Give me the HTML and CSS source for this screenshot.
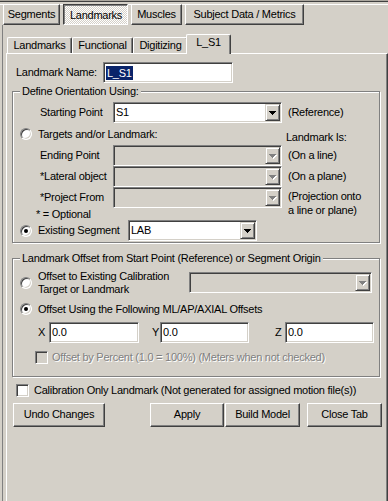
FILE: index.html
```html
<!DOCTYPE html>
<html>
<head>
<meta charset="utf-8">
<title>Landmarks</title>
<link rel="stylesheet" href="styles.css">
</head>
<body>
<div class="window">
  <div class="frame-top"></div>
  <div class="btabs">
    <div class="btab w-seg">Segments</div>
    <div class="btab pressed w-lm">Landmarks</div>
    <div class="btab w-mus">Muscles</div>
    <div class="btab w-subj">Subject Data / Metrics</div>
  </div>
  <div class="outer-page">
    <div class="itabs">
      <div class="itab w-t1">Landmarks</div>
      <div class="itab w-t2">Functional</div>
      <div class="itab w-t3">Digitizing</div>
      <div class="itab sel w-t4">L_S1</div>
    </div>
    <div class="ipage">
      <div class="name-row">
        <span class="name-lbl">Landmark Name:</span>
        <div class="edit name-edit"><span class="hilite">L_S1</span></div>
      </div>

      <div class="group g1">
        <div class="gtitle">Define Orientation Using:</div>
        <div class="orow row-a">
          <span class="olbl">Starting Point</span>
          <div class="combo w-main"><span class="combo-text">S1</span><span class="combo-btn"><svg width="7" height="4" viewBox="0 0 7 4" shape-rendering="crispEdges"><path d="M0 0h7v1h-1v1h-1v1h-1v1h-1v-1h-1v-1h-1v-1h-1z" fill="#000"/></svg></span></div>
          <span class="note">(Reference)</span>
        </div>
        <div class="rrow row-b">
          <span class="radio"></span>
          <span class="rlbl">Targets and/or Landmark:</span>
          <span class="note-is">Landmark Is:</span>
        </div>
        <div class="orow">
          <span class="olbl">Ending Point</span>
          <div class="combo disabled w-main"><span class="combo-text"></span><span class="combo-btn"><svg width="8" height="5" viewBox="0 0 8 5" shape-rendering="crispEdges"><path d="M1 1h7v1h-1v1h-1v1h-1v1h-1v-1h-1v-1h-1v-1h-1z" fill="#fff"/><path d="M0 0h7v1h-1v1h-1v1h-1v1h-1v-1h-1v-1h-1v-1h-1z" fill="#808080"/></svg></span></div>
          <span class="note">(On a line)</span>
        </div>
        <div class="orow">
          <span class="olbl">*Lateral object</span>
          <div class="combo disabled w-main"><span class="combo-text"></span><span class="combo-btn"><svg width="8" height="5" viewBox="0 0 8 5" shape-rendering="crispEdges"><path d="M1 1h7v1h-1v1h-1v1h-1v1h-1v-1h-1v-1h-1v-1h-1z" fill="#fff"/><path d="M0 0h7v1h-1v1h-1v1h-1v1h-1v-1h-1v-1h-1v-1h-1z" fill="#808080"/></svg></span></div>
          <span class="note">(On a plane)</span>
        </div>
        <div class="orow">
          <span class="olbl">*Project From</span>
          <div class="combo disabled w-main"><span class="combo-text"></span><span class="combo-btn"><svg width="8" height="5" viewBox="0 0 8 5" shape-rendering="crispEdges"><path d="M1 1h7v1h-1v1h-1v1h-1v1h-1v-1h-1v-1h-1v-1h-1z" fill="#fff"/><path d="M0 0h7v1h-1v1h-1v1h-1v1h-1v-1h-1v-1h-1v-1h-1z" fill="#808080"/></svg></span></div>
          <span class="note note-2">(Projection onto<br>a line or plane)</span>
        </div>
        <div class="opt-row">* = Optional</div>
        <div class="rrow row-seg">
          <span class="radio on"></span>
          <span class="rlbl seg-lbl">Existing Segment</span>
          <div class="combo w-seg-combo"><span class="combo-text">LAB</span><span class="combo-btn"><svg width="7" height="4" viewBox="0 0 7 4" shape-rendering="crispEdges"><path d="M0 0h7v1h-1v1h-1v1h-1v1h-1v-1h-1v-1h-1v-1h-1z" fill="#000"/></svg></span></div>
        </div>
      </div>

      <div class="group g2">
        <div class="gtitle">Landmark Offset from Start Point (Reference) or Segment Origin</div>
        <div class="rrow row-c">
          <span class="radio"></span>
          <span class="rlbl two-line">Offset to Existing Calibration<br>Target or Landmark</span>
          <div class="combo disabled w-cal"><span class="combo-text"></span><span class="combo-btn"><svg width="8" height="5" viewBox="0 0 8 5" shape-rendering="crispEdges"><path d="M1 1h7v1h-1v1h-1v1h-1v1h-1v-1h-1v-1h-1v-1h-1z" fill="#fff"/><path d="M0 0h7v1h-1v1h-1v1h-1v1h-1v-1h-1v-1h-1v-1h-1z" fill="#808080"/></svg></span></div>
        </div>
        <div class="rrow row-d">
          <span class="radio on"></span>
          <span class="rlbl">Offset Using the Following ML/AP/AXIAL Offsets</span>
        </div>
        <div class="xyz-row">
          <span class="axis ax-x">X</span>
          <div class="edit w-x">0.0</div>
          <span class="axis ax-y">Y</span>
          <div class="edit w-y">0.0</div>
          <span class="axis ax-z">Z</span>
          <div class="edit w-z">0.0</div>
        </div>
        <div class="chk-row pct-row">
          <span class="check disabled"></span>
          <span class="dis-text">Offset by Percent (1.0 = 100%) (Meters when not checked)</span>
        </div>
      </div>

      <div class="chk-row cal-row">
        <span class="check"></span>
        <span>Calibration Only Landmark (Not generated for assigned motion file(s))</span>
      </div>

      <div class="btn-row">
        <div class="btn w-undo">Undo Changes</div>
        <div class="btn w-apply">Apply</div>
        <div class="btn w-build">Build Model</div>
        <div class="btn w-close">Close Tab</div>
      </div>
    </div>
  </div>
</div>
</body>
</html>
```
FILE: styles.css
```css
* { box-sizing: border-box; }
html, body { margin: 0; padding: 0; }
body {
  background: #d4d0c8;
  font-family: "Liberation Sans", Arial, sans-serif;
  font-size: 11px;
  line-height: 13px;
  letter-spacing: -0.25px;
  color: #000;
}
.window {
  width: 388px;
  height: 501px;
  overflow: hidden;
  background: #d4d0c8;
}
.frame-top {
  height: 2px;
  border-top: 1px solid #aaa69e;
  border-bottom: 1px solid #404040;
}

/* outer button tabs */
.btabs {
  display: flex;
  gap: 3px;
  padding-left: 3px;
  margin-top: 2px;
  height: 21px;
  background: linear-gradient(#fff, #fff) top left / 100% 1px no-repeat;
}
.btab {
  height: 21px;
  border: 1px solid;
  border-color: #fff #404040 #404040 #fff;
  box-shadow: inset -1px -1px 0 #808080;
  text-align: center;
  line-height: 18px;
  white-space: nowrap;
}
.btab.pressed {
  border-color: #404040 #fff #fff #404040;
  box-shadow: inset 1px 1px 0 #808080;
  background: repeating-conic-gradient(#fff 0 25%, #d4d0c8 0 50%) 0 0 / 2px 2px;
  padding-top: 1px;
  padding-left: 1px;
}
.w-seg { width: 57px; }
.w-lm { width: 65px; }
.w-mus { width: 51px; }
.w-subj { width: 119px; }

/* outer page */
.outer-page {
  border-left: 1px solid #808080;
  margin-left: 2px;
  padding-left: 3px;
  padding-top: 9px;
}

/* inner tabs */
.itabs {
  display: flex;
  align-items: flex-end;
  height: 19px;
  padding-left: 1px;
}
.itab {
  height: 16px;
  border: 1px solid #fff;
  border-bottom: none;
  border-right-color: #404040;
  border-radius: 2px 2px 0 0;
  box-shadow: inset -1px 0 0 #808080;
  text-align: center;
  line-height: 14px;
  white-space: nowrap;
  background: #d4d0c8;
}
.itab.sel {
  height: 20px;
  margin: 0 -2px -1px -2px;
  position: relative;
  z-index: 1;
  line-height: 15px;
}
.w-t1 { width: 65px; }
.w-t2 { width: 61px; }
.w-t3 { width: 55px; }
.w-t4 { width: 45px; }

.ipage {
  height: 460px;
  border-top: 1px solid #fff;
  border-left: 1px solid #fff;
  border-right: 1px solid #404040;
  box-shadow: inset -1px 0 0 #808080;
}

/* fields */
.edit {
  height: 21px;
  background: #fff;
  border: 1px solid;
  border-color: #808080 #fff #fff #808080;
  box-shadow: inset 1px 1px 0 #404040, inset -1px -1px 0 #d4d0c8;
  padding: 0 2px;
  line-height: 19px;
  white-space: nowrap;
  overflow: hidden;
}
.name-row {
  display: flex;
  align-items: center;
  height: 21px;
  margin-top: 8px;
  padding-left: 9px;
}
.name-lbl { width: 87px; }
.name-edit { width: 130px; display: flex; align-items: center; padding-left: 2px; }
.hilite {
  background: #0a246a;
  color: #fff;
  line-height: 14px;
  padding: 0 1px;
}

.combo {
  display: flex;
  height: 21px;
  background: #fff;
  border: 1px solid;
  border-color: #808080 #fff #fff #808080;
  box-shadow: inset 1px 1px 0 #404040, inset -1px -1px 0 #d4d0c8;
  padding: 1px;
  flex: none;
}
.combo.disabled { background: #d4d0c8; }
.combo-text {
  flex: 1;
  padding-left: 1px;
  line-height: 17px;
  white-space: nowrap;
}
.combo-btn {
  width: 15px;
  height: 17px;
  border: 1px solid;
  border-color: #d4d0c8 #404040 #404040 #d4d0c8;
  box-shadow: inset 1px 1px 0 #fff, inset -1px -1px 0 #808080;
  background: #d4d0c8;
  display: flex;
  align-items: center;
  justify-content: center;
}
.combo-btn svg { display: block; }
.disabled .combo-btn svg { margin-left: 1px; margin-top: 1px; }

/* groups */
.group {
  border: 1px solid #808080;
  box-shadow: 1px 1px 0 #fff, inset 1px 1px 0 #fff;
  margin: 0 7px 0 5px;
}
.gtitle {
  display: table;
  margin: -7px 0 0 7px;
  padding: 0 2px;
  background: #d4d0c8;
  line-height: 13px;
  white-space: nowrap;
}
.g1 { margin-top: 8px; padding-bottom: 1px; }
.g2 { margin-top: 15px; padding-bottom: 12px; }

.orow {
  display: flex;
  align-items: center;
  height: 21px;
  padding-left: 27px;
}
.row-a { margin-top: 4px; }
.olbl { width: 73px; white-space: nowrap; }
.w-main { width: 169px; }
.note { margin-left: 6px; white-space: nowrap; }
.note-2 {
  align-self: flex-start;
  margin-top: 2px;
  height: 21px;
  line-height: 14px;
}

.rrow {
  display: flex;
  align-items: center;
  padding-left: 7px;
}
.radio {
  flex: none;
  width: 12px;
  height: 12px;
  border-radius: 50%;
  border: 1px solid;
  border-color: #808080 #fff #fff #808080;
  box-shadow: inset 1px 1px 0 #404040, inset -1px -1px 0 #d4d0c8;
  background: #fff;
  display: flex;
  align-items: center;
  justify-content: center;
}
.radio.on::after {
  content: "";
  width: 4px;
  height: 4px;
  border-radius: 50%;
  background: #000;
}
.rlbl { margin-left: 6px; white-space: nowrap; }
.row-b { height: 22px; }
.note-is {
  margin-left: auto;
  width: 93px;
  align-self: flex-end;
  white-space: nowrap;
  margin-bottom: 1px;
}
.opt-row {
  height: 12px;
  line-height: 12px;
  padding-left: 23px;
}
.row-seg { height: 21px; }
.seg-lbl { width: 90px; }
.w-seg-combo { width: 129px; }

.row-c { height: 23px; margin-top: 6px; }
.two-line { width: 151px; line-height: 13px; }
.w-cal { width: 183px; }
.row-d { height: 18px; margin-top: 6px; }

.xyz-row {
  display: flex;
  align-items: center;
  height: 21px;
  margin-top: 4px;
  padding-left: 25px;
}
.axis { flex: none; }
.ax-x { width: 11px; }
.ax-y { width: 8px; margin-left: 13px; }
.ax-z { width: 10px; margin-left: 26px; }
.w-x { width: 90px; }
.w-y { width: 89px; }
.w-z { width: 89px; }

.chk-row {
  display: flex;
  align-items: center;
  height: 13px;
  white-space: nowrap;
}
.check {
  flex: none;
  width: 13px;
  height: 13px;
  background: #fff;
  border: 1px solid;
  border-color: #808080 #fff #fff #808080;
  box-shadow: inset 1px 1px 0 #404040, inset -1px -1px 0 #d4d0c8;
}
.check.disabled { background: #d4d0c8; }
.pct-row { margin-top: 8px; padding-left: 22px; gap: 4px; }
.dis-text { color: #808080; text-shadow: 1px 1px 0 #fff; }
.cal-row { margin-top: 7px; padding-left: 9px; gap: 5px; }

.btn-row {
  display: flex;
  margin-top: 6px;
  padding-left: 6px;
}
.btn {
  height: 24px;
  border: 1px solid;
  border-color: #fff #404040 #404040 #fff;
  box-shadow: inset -1px -1px 0 #808080;
  text-align: center;
  line-height: 21px;
  white-space: nowrap;
}
.w-undo { width: 92px; }
.w-apply { width: 74px; margin-left: 45px; }
.w-build { width: 75px; margin-left: 1px; }
.w-close { width: 75px; margin-left: 7px; }
```
